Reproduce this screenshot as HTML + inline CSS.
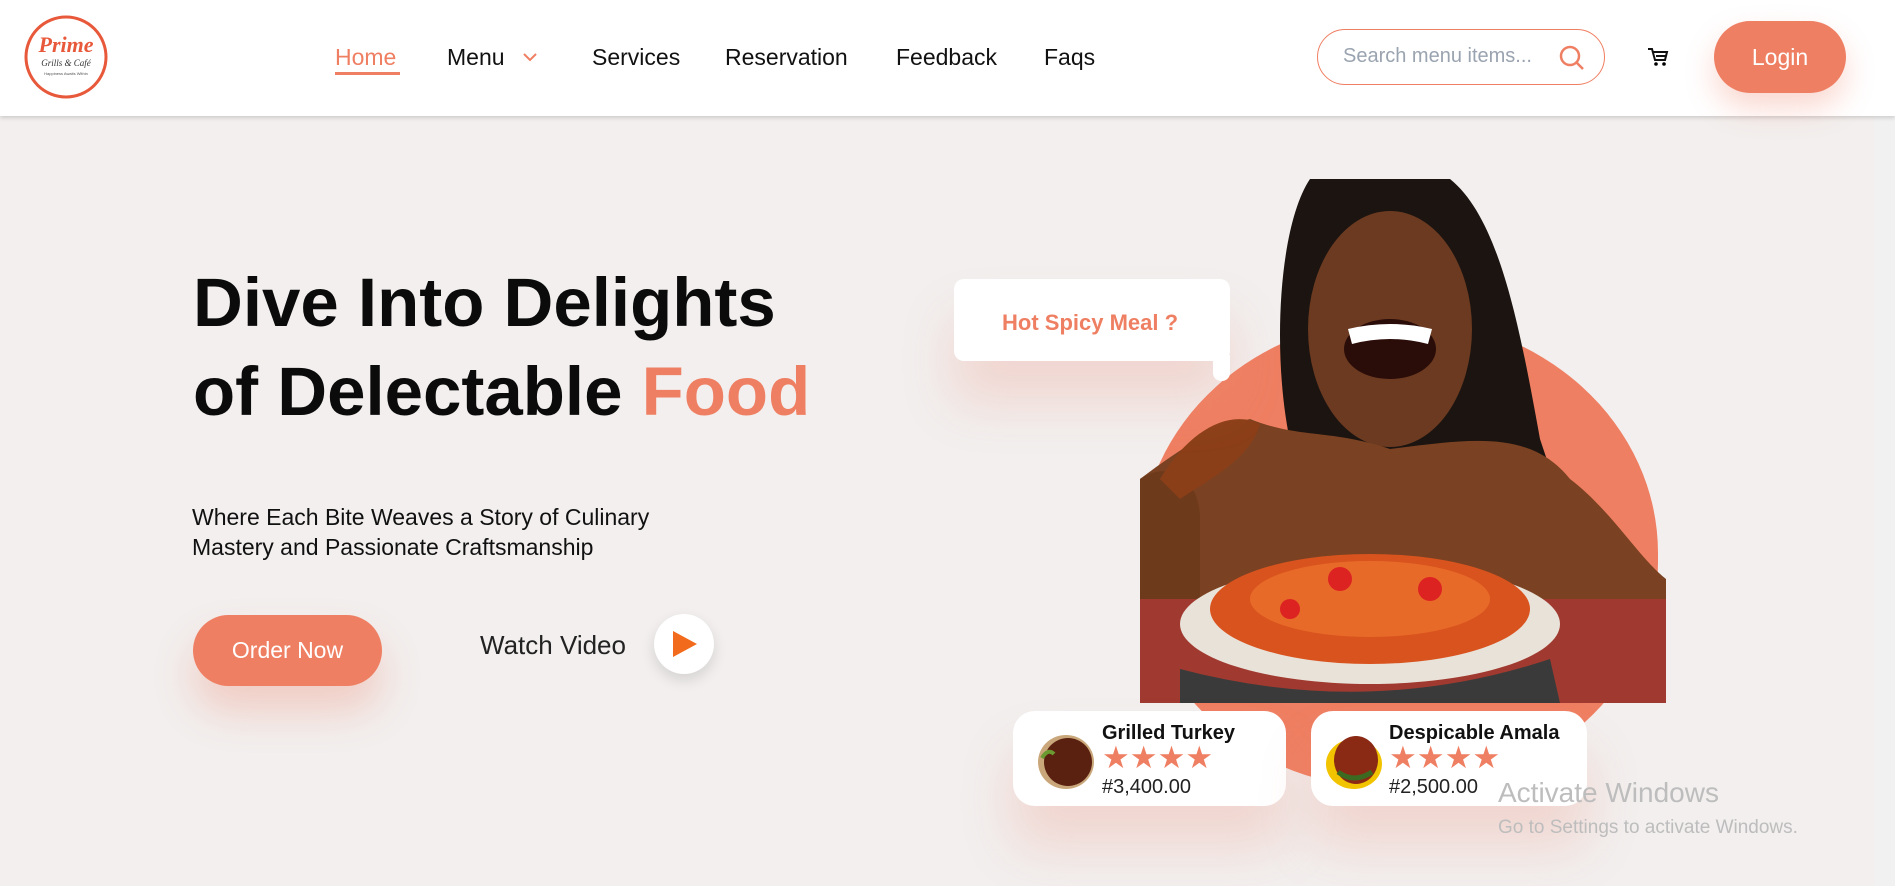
<!DOCTYPE html>
<html><head><meta charset="utf-8">
<style>
*{margin:0;padding:0;box-sizing:border-box}
body{width:1895px;height:886px;overflow:hidden;background:#f2efee;font-family:"Liberation Sans","DejaVu Sans",sans-serif;position:relative;color:#111}
.hdr{position:absolute;left:0;top:0;width:1895px;height:116px;background:#fff;box-shadow:0 2px 4px rgba(0,0,0,.15);z-index:2}
.nav a{position:absolute;top:44px;font-size:23px;color:#111;text-decoration:none}
.abs{position:absolute}
.card{position:absolute;background:#fff;border-radius:22px;box-shadow:0 40px 50px rgba(240,140,120,.25)}
.star{color:#ef7f62;font-size:31px;letter-spacing:0px}
</style></head><body>
<div class="hdr">
 <svg class="abs" style="left:23px;top:14px" width="86" height="86" viewBox="0 0 86 86">
  <circle cx="43" cy="43" r="40" fill="#fff" stroke="#e8583a" stroke-width="3"/>
  <text x="43" y="38" text-anchor="middle" font-family="Liberation Serif" font-style="italic" font-weight="bold" font-size="22" fill="#e8583a">Prime</text>
  <text x="43" y="52" text-anchor="middle" font-family="Liberation Serif" font-style="italic" font-size="9" fill="#333">Grills &amp; Café</text>
  <text x="43" y="61" text-anchor="middle" font-size="4" fill="#555">Happiness Awaits Within</text>
 </svg>
 <div class="nav">
  <a style="left:335px;color:#ef7f62">Home</a>
  <div class="abs" style="left:335px;top:72px;width:65px;height:3px;background:#ef7f62"></div>
  <a style="left:447px">Menu</a>
  <svg class="abs" style="left:523px;top:52px" width="14" height="10"><path d="M1 2 L7 8 L13 2" stroke="#ef7f62" stroke-width="2" fill="none"/></svg>
  <a style="left:592px">Services</a>
  <a style="left:725px">Reservation</a>
  <a style="left:896px">Feedback</a>
  <a style="left:1044px">Faqs</a>
 </div>
 <div class="abs" style="left:1317px;top:29px;width:288px;height:56px;border:1.5px solid #ef7f62;border-radius:28px"></div>
 <div class="abs" style="left:1343px;top:45px;font-size:20px;color:#9aa3b0">Search menu items...</div>
 <svg class="abs" style="left:1558px;top:44px" width="28" height="28"><circle cx="12" cy="12" r="9" stroke="#ef7f62" stroke-width="2.5" fill="none"/><path d="M18.5 18.5 L25 25" stroke="#ef7f62" stroke-width="2.5"/></svg>
 <svg class="abs" style="left:1647px;top:47px" width="22" height="20"><path d="M1 2 H5 L8 13 H18 L20 5 H6 M9 9 H19" stroke="#111" stroke-width="2" fill="none"/><circle cx="9" cy="17" r="1.8"/><circle cx="17" cy="17" r="1.8"/></svg>
 <div class="abs" style="left:1714px;top:21px;width:132px;height:72px;border-radius:36px;background:#ef7f62;color:#fff;font-size:23px;text-align:center;line-height:72px;box-shadow:0 15px 30px rgba(239,127,98,.3)">Login</div>
</div>

<div class="abs" style="left:193px;top:258px;font-size:69px;line-height:89px;font-weight:bold;color:#0b0b0b">Dive Into Delights<br>of Delectable <span style="color:#ef7f62">Food</span></div>
<div class="abs" style="left:192px;top:502px;font-size:23px;line-height:30px;color:#111">Where Each Bite Weaves a Story of Culinary<br>Mastery and Passionate Craftsmanship</div>
<div class="abs" style="left:193px;top:615px;width:189px;height:71px;border-radius:36px;background:#ef7f62;color:#fff;font-size:23px;text-align:center;line-height:71px;box-shadow:0 25px 40px rgba(239,127,98,.3)">Order Now</div>
<div class="abs" style="left:480px;top:630px;font-size:26px;color:#222">Watch Video</div>
<div class="abs" style="left:654px;top:614px;width:60px;height:60px;border-radius:50%;background:#fff;box-shadow:0 6px 14px rgba(0,0,0,.12)"></div>
<svg class="abs" style="left:670px;top:629px" width="30" height="30"><path d="M3 2 L27 15 L3 28Z" fill="#f26a1b"/></svg>

<!-- circle + woman -->
<div class="abs" style="left:1140px;top:318px;width:518px;height:470px;border-radius:50% 50% 48% 48%;background:#ef7f62"></div>
<svg class="abs" style="left:1140px;top:179px" width="526" height="524" viewBox="0 0 526 524">
 <path d="M170 0 H310 C360 40 380 150 400 260 L420 320 L330 320 L170 320 C130 250 130 60 170 0Z" fill="#1c1410"/>
 <ellipse cx="250" cy="150" rx="82" ry="118" fill="#6b3a20"/>
 <path d="M110 240 C160 260 190 250 250 270 C330 260 390 250 430 300 C470 330 500 380 526 400 V524 H0 V300 C40 270 70 250 110 240Z" fill="#7a4222"/>
 <path d="M0 300 C30 280 60 300 60 340 L60 450 L0 450Z" fill="#6e3a1c"/>
 <ellipse cx="250" cy="170" rx="46" ry="30" fill="#2a0c08"/>
 <path d="M208 150 Q250 140 292 150 L288 165 Q250 155 212 165Z" fill="#fff"/>
 <path d="M20 300 C50 250 90 230 120 245 C110 280 70 300 40 320Z" fill="#8b3f18"/>
 <path d="M0 420 H526 V524 H0Z" fill="#a03a30"/>
 <ellipse cx="230" cy="445" rx="190" ry="60" fill="#e9e2d8"/>
 <ellipse cx="230" cy="430" rx="160" ry="55" fill="#d9531e"/>
 <ellipse cx="230" cy="420" rx="120" ry="38" fill="#e86a28"/>
 <circle cx="200" cy="400" r="12" fill="#d22"/><circle cx="290" cy="410" r="12" fill="#d22"/><circle cx="150" cy="430" r="10" fill="#d22"/>
 <path d="M40 490 Q230 540 410 480 L420 524 H40Z" fill="#3a3a3a"/>
</svg>

<!-- bubble -->
<div class="card" style="left:954px;top:279px;width:276px;height:82px;border-radius:10px"></div>
<div class="abs" style="left:1213px;top:355px;width:17px;height:26px;background:#fff;border-radius:0 0 8px 8px"></div>
<div class="abs" style="left:1002px;top:310px;font-size:22px;font-weight:bold;color:#ef7f62">Hot Spicy Meal ?</div>

<!-- cards -->
<div class="card" style="left:1013px;top:711px;width:273px;height:95px"></div>
<svg class="abs" style="left:1034px;top:728px" width="62" height="64"><ellipse cx="32" cy="34" rx="28" ry="27" fill="#c9a77a"/><ellipse cx="34" cy="34" rx="24" ry="24" fill="#5a2010"/><path d="M8 30 Q14 20 20 26" stroke="#6a9a30" stroke-width="4" fill="none"/></svg>
<div class="abs" style="left:1102px;top:722px;font-size:20px;font-weight:bold">Grilled Turkey</div>
<div class="abs star" style="left:1102px;top:740px">★★★★</div>
<div class="abs" style="left:1102px;top:776px;font-size:20px;color:#222">#3,400.00</div>

<div class="card" style="left:1311px;top:711px;width:276px;height:95px"></div>
<svg class="abs" style="left:1324px;top:728px" width="62" height="64"><ellipse cx="30" cy="36" rx="28" ry="25" fill="#f2c400"/><ellipse cx="32" cy="32" rx="22" ry="24" fill="#8b2a14"/><path d="M14 44 Q30 56 48 44" stroke="#3c6a20" stroke-width="5" fill="none"/></svg>
<div class="abs" style="left:1389px;top:722px;font-size:20px;font-weight:bold">Despicable Amala</div>
<div class="abs star" style="left:1389px;top:740px">★★★★</div>
<div class="abs" style="left:1389px;top:776px;font-size:20px;color:#222">#2,500.00</div>

<div class="abs" style="left:1498px;top:777px;font-size:28px;color:#bdbdbd">Activate Windows</div>
<div class="abs" style="left:1498px;top:817px;font-size:19px;color:#bdbdbd">Go to Settings to activate Windows.</div>
<div class="abs" style="left:1874px;top:116px;width:21px;height:770px;background:#f1f1f1"></div>
</body></html>
